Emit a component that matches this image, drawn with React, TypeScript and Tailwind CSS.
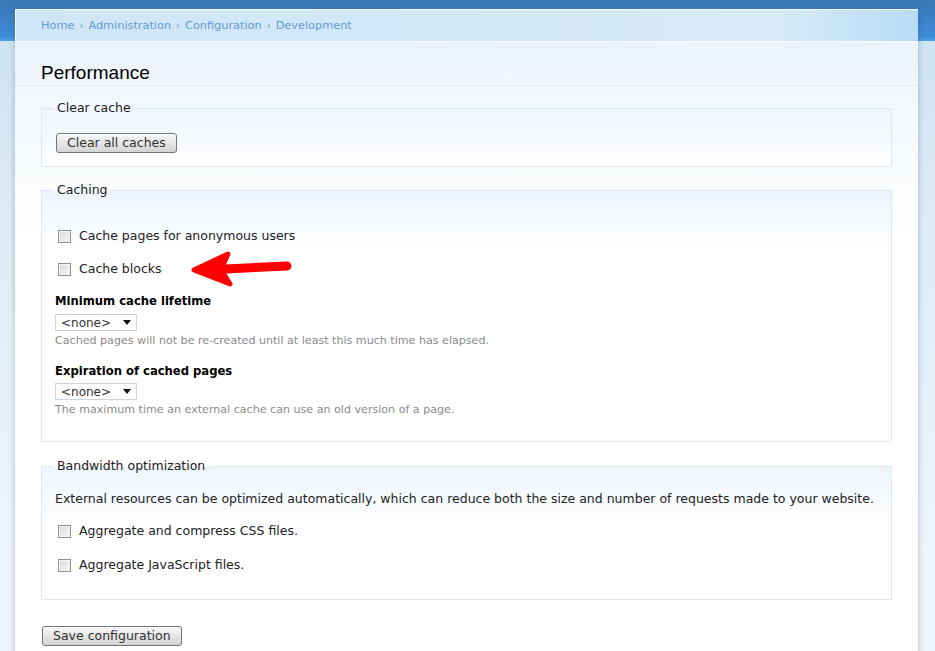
import React from 'react';

const body = "font-['DejaVu_Sans',Verdana,sans-serif]";

const Checkbox: React.FC = () => (
  <span className="ml-[3px] mr-[8px] inline-block h-[13px] w-[13px] shrink-0 border border-[#8f8f8f] bg-[linear-gradient(135deg,#d8d8d8,#f7f7f7)] shadow-[inset_0_0_0_1px_#f4f4f4]" />
);

const CheckRow: React.FC<{ label: string; className?: string }> = ({ label, className = '' }) => (
  <label className={`flex h-[18px] items-center text-[12.5px] text-[#222] ${className}`}>
    <Checkbox />
    {label}
  </label>
);

const Select: React.FC<{ className?: string }> = ({ className = '' }) => (
  <div className={`flex h-[17px] w-[82px] items-center justify-between border border-[#cfd4d8] bg-white pl-[5px] pr-[3px] text-[12px] leading-none text-[#333] ${className}`}>
    <span>&lt;none&gt;</span>
    <svg width="8" height="5" viewBox="0 0 8 5" className="mr-[2px]">
      <path d="M0 0h8L4 5z" fill="#111" />
    </svg>
  </div>
);

const Button: React.FC<{ label: string; className?: string }> = ({ label, className = '' }) => (
  <button className={`h-[20px] rounded-[3px] border border-[#757575] bg-[linear-gradient(#f6f6f6,#e6e6e6_50%,#d4d4d4)] px-[10px] text-[12.5px] leading-none text-[#333] shadow-[inset_0_1px_0_#fff] ${className}`}>
    {label}
  </button>
);

const Fieldset: React.FC<{ legend: string; className?: string; children: React.ReactNode }> = ({ legend, className = '', children }) => (
  <fieldset className={`border border-[#dde8f2] bg-[linear-gradient(#edf4fb,#ffffff_60px)] px-[13px] ${className}`}>
    <legend className="-ml-[2px] px-[4px] text-[12.5px] leading-[16px] text-[#222]">{legend}</legend>
    {children}
  </fieldset>
);

const Label: React.FC<{ text: string }> = ({ text }) => (
  <div className="mt-[14px] h-[18px] text-[11.6px] font-bold leading-[18px] text-black">{text}</div>
);

const Help: React.FC<{ text: string }> = ({ text }) => (
  <p className="mt-[3px] h-[14px] text-[11.1px] leading-[14px] text-[#8a8a8a]">{text}</p>
);

export default function App() {
  const crumbs = ['Home', 'Administration', 'Configuration', 'Development'];

  return (
    <div className={`relative h-[651px] w-full overflow-hidden bg-[linear-gradient(#3977b6_0px,#3e8bd6_36px,#4aa3e6_41px,#cde3f2_41px,#dcebf6_200px,#eef5fb_560px)] ${body}`}>
      <div className="pl-[15px] pt-[9px]">
        <div className="w-[903px] shadow-[0_0_6px_rgba(40,90,140,0.35)]">
          {/* breadcrumb bar */}
          <div className="flex h-[32px] items-center border-t border-l border-white bg-[linear-gradient(90deg,#d0e6f7,#d6eaf8_85%,#b8dbf5)] pl-[25px] pt-[2px] text-[11.3px] text-[#5f9bd6]">
            {crumbs.map((c, i) => (
              <span key={c}>
                {i > 0 && <span className="px-[5px] text-[10px]">›</span>}
                {c}
              </span>
            ))}
          </div>

          {/* content */}
          <div className="border-t border-white bg-[linear-gradient(#ecf3fb,#f3f8fc_60px,#ffffff_200px)] px-[26px] pb-[40px]">
            <div className="-mx-[26px] border-b border-[#e3ecf4] px-[26px] pt-[19px]">
              <h1 className="h-[24px] font-['Liberation_Sans',Arial,sans-serif] text-[19px] leading-[24px] text-black">Performance</h1>
            </div>

            <Fieldset legend="Clear cache" className="mt-[14px] pb-[12px] pt-[14px]">
              <Button label="Clear all caches" className="ml-[1px]" />
            </Fieldset>

            <Fieldset legend="Caching" className="mt-[15px] pb-[24px] pt-[29px]">
              <CheckRow label="Cache pages for anonymous users" />
              <CheckRow label="Cache blocks" className="mt-[15px]" />
              <Label text="Minimum cache lifetime" />
              <Select className="mt-[4px]" />
              <Help text="Cached pages will not be re-created until at least this much time has elapsed." />
              <Label text="Expiration of cached pages" />
              <Select className="mt-[3px]" />
              <Help text="The maximum time an external cache can use an old version of a page." />
            </Fieldset>

            <Fieldset legend="Bandwidth optimization" className="mt-[16px] pb-[25px] pt-[16px]">
              <p className="h-[18px] text-[12.5px] leading-[18px] text-[#222]">
                External resources can be optimized automatically, which can reduce both the size and number of requests made to your website.
              </p>
              <CheckRow label="Aggregate and compress CSS files." className="mt-[14px]" />
              <CheckRow label="Aggregate JavaScript files." className="mt-[16px]" />
            </Fieldset>

            <Button label="Save configuration" className="ml-[1px] mt-[26px]" />
          </div>
        </div>
      </div>

      {/* annotation arrow */}
      <svg className="pointer-events-none absolute left-[185px] top-[245px]" width="110" height="48" viewBox="0 0 110 48">
        <path d="M30 24.5 L102 21" stroke="#ff0000" strokeWidth="9" strokeLinecap="round" fill="none" />
        <path d="M9 25 L43 9 L36 24.5 L45 39 Z" fill="#ff0000" stroke="#ff0000" strokeWidth="5" strokeLinejoin="round" />
      </svg>
    </div>
  );
}
